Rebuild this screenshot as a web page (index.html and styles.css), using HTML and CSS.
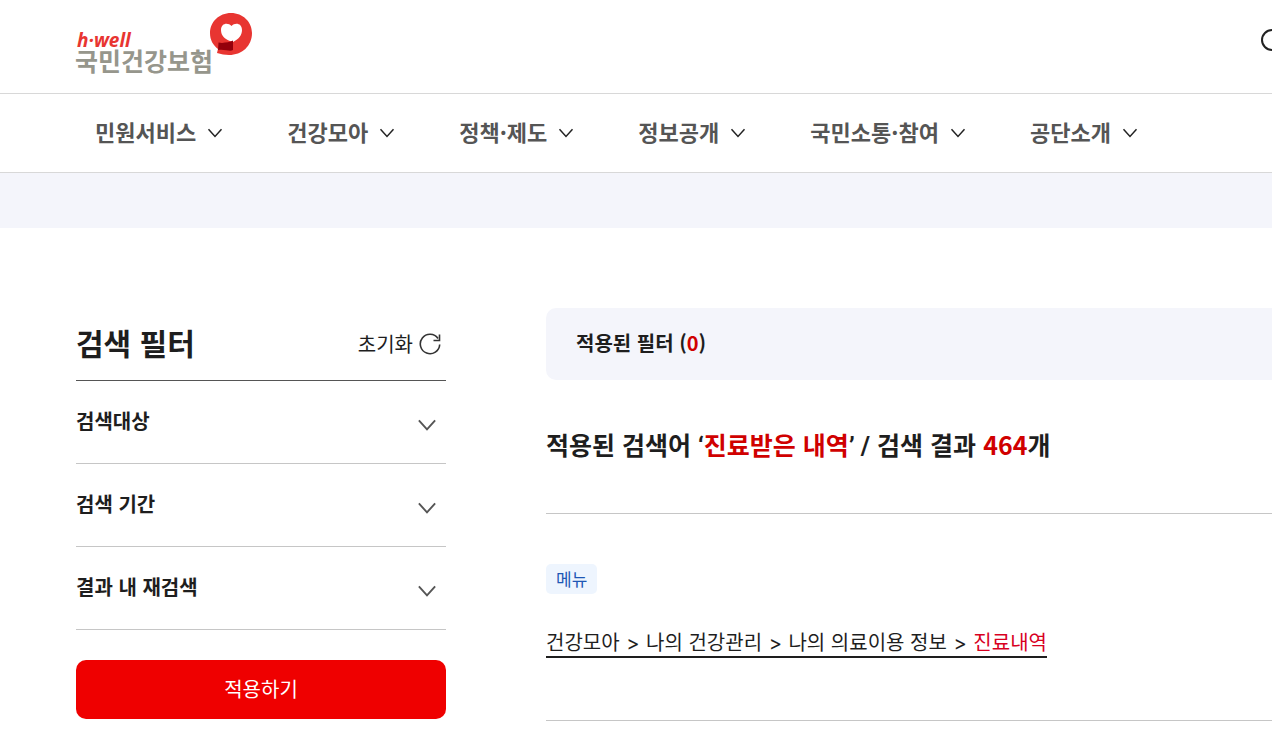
FILE: index.html
```
<!DOCTYPE html>
<html lang="ko">
<head>
    <meta charset="UTF-8">
    <meta name="viewport" content="width=device-width, initial-scale=1">
    <title>국민건강보험</title>
    <link rel="stylesheet" href="styles.css">
</head>
<body>
    <!-- Shared icons -->
    <svg class="sprite" aria-hidden="true">
        <symbol id="icon-arrow" viewBox="0 0 16 16">
            <path d="M1.5 4.3 L8 11.5 L14.5 4.3" fill="none" stroke="currentColor"/>
        </symbol>
    </svg>

    <header class="header">
        <div class="inner header-top">
            <a href="#" class="logo">
                <svg width="180" height="78" viewBox="0 0 180 78">
                    <text class="logo-en" x="1" y="39">h·well</text>
                    <text class="logo-ko" x="-1" y="63">국민건강보험</text>
                    <path d="M155 5 C167 5 176 14 176 25 C176 38 166 47 153 47 C149 47 145 46 141 45 L142 41 C137 37 134 32 134 25 C134 14 143 5 155 5 Z" fill="#e83531"/>
                    <path d="M155.5 18 C152 14 145 15 145 22 C145 28 149 31 154 33 L157 34 C163 31 166 27 166 22 C166 15 159 14 155.5 18 Z" fill="#fff"/>
                    <path d="M142.5 34.5 L146 35 C150 34.5 154 34 157 32.5 V42 C154 44 149 41 142 42 Z" fill="#94000b"/>
                </svg>
            </a>
            <button type="button" class="search-btn" aria-label="검색">
                <svg width="28" height="38" viewBox="0 0 28 38">
                    <circle cx="11" cy="12" r="10" fill="none" stroke="#222" stroke-width="2"/>
                    <path d="M18 19 L26 27" stroke="#222" stroke-width="2"/>
                </svg>
            </button>
        </div>
        <nav class="gnb">
            <div class="inner gnb-list">
                <button type="button">민원서비스<svg><use href="#icon-arrow"/></svg></button>
                <button type="button">건강모아<svg><use href="#icon-arrow"/></svg></button>
                <button type="button">정책·제도<svg><use href="#icon-arrow"/></svg></button>
                <button type="button">정보공개<svg><use href="#icon-arrow"/></svg></button>
                <button type="button">국민소통·참여<svg><use href="#icon-arrow"/></svg></button>
                <button type="button">공단소개<svg><use href="#icon-arrow"/></svg></button>
            </div>
        </nav>
    </header>
    <div class="location-bar"></div>

    <main class="inner content">
        <!-- Search filter -->
        <aside class="filter">
            <div class="filter-head">
                <h2>검색 필터</h2>
                <button type="button" class="reset-btn">초기화
                    <svg width="22" height="22" viewBox="0 0 22 22" fill="none" stroke="#333" stroke-width="1.6">
                        <path d="M20.7 11.5 A9.7 9.7 0 1 1 19 5.5"/>
                        <path d="M20.5 1.5 V7.5 H14.5"/>
                    </svg>
                </button>
            </div>
            <button type="button" class="filter-item">검색대상<svg><use href="#icon-arrow"/></svg></button>
            <button type="button" class="filter-item">검색 기간<svg><use href="#icon-arrow"/></svg></button>
            <button type="button" class="filter-item">결과 내 재검색<svg><use href="#icon-arrow"/></svg></button>
            <button type="button" class="apply-btn">적용하기</button>
        </aside>

        <!-- Search result -->
        <section class="result">
            <p class="applied">적용된 필터 (<em>0</em>)</p>
            <h2 class="result-title">적용된 검색어 <span class="quote">‘</span><em>진료받은 내역</em><span class="quote">’ /</span> 검색 결과 <em>464</em>개</h2>
            <article class="result-item">
                <span class="badge">메뉴</span>
                <a href="#" class="result-link">건강모아 <span class="sep">&gt;</span> 나의 건강관리 <span class="sep">&gt;</span> 나의 의료이용 정보 <span class="sep">&gt;</span> <em>진료내역</em></a>
            </article>
        </section>
    </main>
</body>
</html>
```
FILE: styles.css
```
* {
    box-sizing: border-box;
}
body {
    margin: 0;
    overflow-x: hidden;
    background: #fff;
    color: #1e1e1e;
    font-family: "Noto Sans CJK KR", "Noto Sans", sans-serif;
    font-size: 20px;
    line-height: 30px;
}
h2, p {
    margin: 0;
}
em {
    font-style: normal;
    color: #d00000;
}
button {
    padding: 0;
    border: 0;
    background: none;
    color: inherit;
    font: inherit;
    cursor: pointer;
}
.sprite {
    display: none;
}
.inner {
    min-width: 1365px;
    padding: 0 76px;
}

/* Header */
.header-top {
    display: flex;
    justify-content: space-between;
    align-items: center;
    height: 93px;
}
.logo svg {
    display: block;
    overflow: visible;
}
.logo-en {
    font: italic 700 19px "Open Sans", sans-serif;
    fill: #e83531;
}
.logo-ko {
    font: 700 25px "Noto Sans CJK KR", sans-serif;
    fill: #96968c;
}
.search-btn svg {
    display: block;
}
.gnb {
    border-top: 1px solid #d8d8d8;
    border-bottom: 1px solid #d8d8d8;
}
.gnb-list {
    display: flex;
    gap: 26px;
}
.gnb-list button {
    display: flex;
    align-items: center;
    gap: 11px;
    height: 78px;
    padding: 0 19px 4px;
    color: #555;
    font-size: 22px;
    font-weight: 700;
}
.gnb-list svg {
    width: 16px;
    height: 16px;
    margin-top: 4px;
    color: #222;
    stroke-width: 1.5;
}
.location-bar {
    height: 55px;
    background: #f4f5fb;
}

/* Content */
.content {
    display: flex;
    gap: 100px;
    padding-top: 80px;
}
.filter {
    flex: 0 0 370px;
}
.filter-head {
    display: flex;
    justify-content: space-between;
    align-items: center;
    height: 73px;
    padding-right: 5px;
    border-bottom: 1px solid #555;
}
.filter-head h2 {
    padding-bottom: 4px;
    font-size: 30px;
}
.reset-btn {
    display: flex;
    align-items: center;
    gap: 6px;
}
.filter-item {
    display: flex;
    justify-content: space-between;
    align-items: center;
    width: 100%;
    height: 83px;
    padding: 0 9px 2px 0;
    border-bottom: 1px solid #c6c6c6;
    font-weight: 700;
}
.filter-item svg {
    width: 20px;
    height: 20px;
    margin-top: 8px;
    color: #555;
    stroke-width: 1.5;
}
.apply-btn {
    width: 100%;
    height: 59px;
    margin-top: 30px;
    padding-bottom: 2px;
    border-radius: 10px;
    background: #ef0000;
    color: #fff;
}
.result {
    flex: 1;
}
.applied {
    padding: 20px 30px 22px;
    border-radius: 10px;
    background: #f4f5fb;
    font-weight: 700;
}
.result-title {
    padding: 46px 0 48px;
    border-bottom: 1px solid #c6c6c6;
    font-size: 25px;
    line-height: 37px;
}
.quote {
    font-family: Roboto, sans-serif;
}
.result-item {
    display: flex;
    flex-direction: column;
    align-items: flex-start;
    gap: 35px;
    padding: 50px 0 62px;
    border-bottom: 1px solid #c6c6c6;
}
.badge {
    padding: 0 10px;
    border-radius: 5px;
    background: #eef5fe;
    color: #1f57b5;
    font-size: 17px;
}
.result-link {
    border-bottom: 2px solid #1e1e1e;
    color: inherit;
    line-height: 26px;
    text-decoration: none;
}
.result-link em {
    color: #d8001f;
}
.sep {
    margin: 0 1px;
    font-family: Inter, sans-serif;
}
```
